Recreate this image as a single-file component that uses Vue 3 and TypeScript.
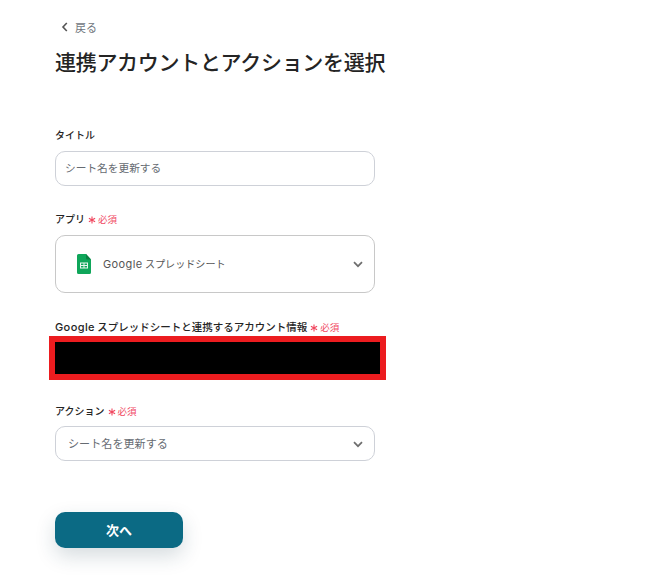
<script setup lang="ts">
const required = '必須'
</script>

<template>
  <main class="page">
    <a class="back">
      <svg class="back-icon" width="8" height="10" viewBox="0 0 8 10"><path d="M5.800 1 2 5l3.800 4" fill="none" stroke="#555" stroke-width="1.600" /></svg>
      <span>戻る</span>
    </a>
    <h1 class="title">連携アカウントとアクションを選択</h1>

    <section class="field first">
      <label class="label">タイトル</label>
      <div class="input">シート名を更新する</div>
    </section>

    <section class="field app-field">
      <label class="label">アプリ<span class="req"><svg class="star" width="8" height="8" viewBox="0 0 8 8"><path d="M4 .5v7M.900 2.200l6.200 3.600M7.100 2.200 .900 5.800" stroke="#f0475f" stroke-width="1.100" /></svg>{{ required }}</span></label>
      <div class="select tall">
        <svg class="sheet" width="14" height="20" viewBox="0 0 14 20">
          <path d="M1.500 0H9l5 5.500v13a1.500 1.500 0 0 1-1.500 1.500h-11A1.500 1.500 0 0 1 0 18.500v-17A1.500 1.500 0 0 1 1.500 0Z" fill="#0fa65a" />
          <path d="M9 0l5 5.500h-3.500A1.500 1.500 0 0 1 9 4Z" fill="#0b8043" />
          <path d="M3 8.500h8v6H3Zm1 1V11h2.500V9.500Zm3.500 0V11H10V9.500ZM4 12v1.500h2.500V12Zm3.500 0v1.500H10V12Z" fill="#e8f5ee" fill-rule="evenodd" />
        </svg>
        <span class="app-name"><span class="latin">Google</span> スプレッドシート</span>
        <svg class="chev" width="10" height="7" viewBox="0 0 10 7"><path d="M1 1.200 5 5.200l4-4" fill="none" stroke="#6e6e6e" stroke-width="1.700" /></svg>
      </div>
    </section>

    <section class="field account-field">
      <label class="label wide"><span class="latin">Google</span>&nbsp;スプレッドシートと連携するアカウント情報<span class="req"><svg class="star" width="8" height="8" viewBox="0 0 8 8"><path d="M4 .5v7M.900 2.200l6.200 3.600M7.100 2.200 .900 5.800" stroke="#f0475f" stroke-width="1.100" /></svg>{{ required }}</span></label>
      <div class="redacted"></div>
    </section>

    <section class="field action-field">
      <label class="label">アクション<span class="req"><svg class="star" width="8" height="8" viewBox="0 0 8 8"><path d="M4 .5v7M.900 2.200l6.200 3.600M7.100 2.200 .900 5.800" stroke="#f0475f" stroke-width="1.100" /></svg>{{ required }}</span></label>
      <div class="select short">
        <span>シート名を更新する</span>
        <svg class="chev" width="10" height="7" viewBox="0 0 10 7"><path d="M1 1.200 5 5.200l4-4" fill="none" stroke="#6e6e6e" stroke-width="1.700" /></svg>
      </div>
    </section>

    <button class="next" type="button">次へ</button>
  </main>
</template>

<style scoped>
.page {
  box-sizing: border-box;
  width: 661px;
  height: 583px;
  padding: 20px 0 0 55px;
  overflow: hidden;
  background: #fff;
  color: #242424;
  font-family: "Noto Sans CJK JP", "Noto Sans", sans-serif;
}
.back {
  display: flex;
  align-items: center;
  gap: 6px;
  height: 14px;
  padding-left: 6px;
  color: #6f767d;
  font-size: 11px;
  line-height: 14px;
}
.title {
  margin: 9px 0 0;
  font-size: 21px;
  line-height: 36px;
  font-weight: 500;
  letter-spacing: -0.3px;
  white-space: nowrap;
}
.field { width: 320px; }
.first { margin-top: 48px; }
.label {
  display: flex;
  align-items: center;
  height: 16px;
  font-size: 10px;
  line-height: 16px;
  font-weight: 500;
  white-space: nowrap;
}
.wide { font-size: 10.500px; }
.latin {
  font-family: "Inter", sans-serif;
  font-size: 11px;
  letter-spacing: 0.4px;
}
.req {
  display: inline-flex;
  align-items: center;
  margin-left: 3px;
  color: #f0475f;
  font-size: 9.500px;
  font-weight: 400;
}
.star {
  margin: 2px 2px 0 0;
  flex: none;
}
.input, .select {
  box-sizing: border-box;
  width: 320px;
  display: flex;
  align-items: center;
  background: #fff;
  border: 1px solid #ced1d8;
  border-radius: 10px;
  color: #666b72;
  font-size: 10.700px;
}
.input {
  height: 35px;
  margin-top: 8px;
  padding: 0 0 2px 9px;
}
.app-field { margin-top: 25px; }
.select { position: relative; }
.tall {
  height: 58px;
  margin-top: 8px;
  padding: 0 0 0 21px;
  border-color: #c8c8c8;
}
.sheet { flex: none; }
.app-name {
  margin: 0 0 2px 12px;
  color: #555;
  font-size: 10.100px;
}
.chev { position: absolute; right: 11px; top: 50%; margin-top: -3px; }
.account-field { margin-top: 26px; }
.redacted {
  box-sizing: border-box;
  width: 337px;
  height: 44px;
  margin: 1px 0 0 -6px;
  background: #000;
  border: 6px solid #ec1c1f;
}
.action-field { margin-top: 23px; }
.short {
  height: 35px;
  margin-top: 7px;
  padding: 0 0 1px 12px;
  font-size: 11.100px;
}
.next {
  display: block;
  width: 128px;
  height: 36px;
  margin-top: 51px;
  padding: 0 0 2px;
  border: 0;
  border-radius: 10px;
  background: #0b6a84;
  box-shadow: 0 8px 20px rgba(30, 60, 80, 0.18);
  color: #fff;
  font-family: inherit;
  font-size: 13px;
  font-weight: 700;
}
</style>

<style>
html, body { margin: 0; background: #fff; }
</style>
